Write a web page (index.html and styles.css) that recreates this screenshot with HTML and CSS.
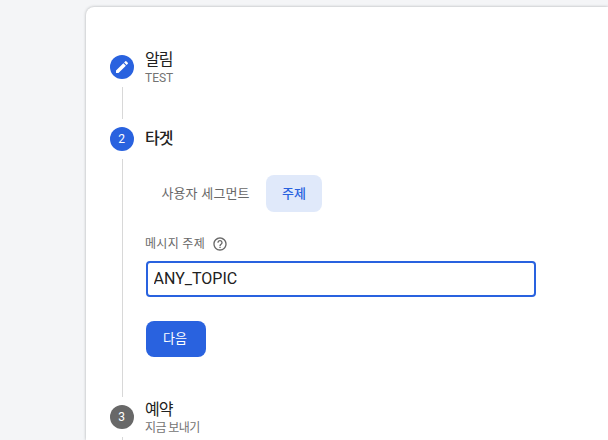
FILE: index.html
```html
<!DOCTYPE html>
<html lang="ko">
<head>
<meta charset="utf-8">
<title>알림</title>
<link rel="stylesheet" href="styles.css">
</head>
<body>
<main class="card">
  <section class="step step-done">
    <div class="rail">
      <span class="badge"><svg width="16" height="16" viewBox="0 0 24 24" fill="currentColor"><path d="M3 17.25V21h3.75L17.81 9.94l-3.75-3.75L3 17.25zM20.71 7.04a1 1 0 0 0 0-1.41l-2.34-2.34a1 1 0 0 0-1.41 0l-1.83 1.83 3.75 3.75 1.83-1.83z"/></svg></span>
      <span class="line"></span>
    </div>
    <div class="content">
      <h2 class="title">알림</h2>
      <p class="summary latin">TEST</p>
    </div>
  </section>
  <section class="step step-active">
    <div class="rail">
      <span class="badge">2</span>
      <span class="line"></span>
    </div>
    <div class="content">
      <h2 class="title">타겟</h2>
      <div class="tabs">
        <button class="tab">사용자 세그먼트</button>
        <button class="tab selected">주제</button>
      </div>
      <div class="label-row">
        <label class="label" for="topic">메시지 주제</label>
        <svg class="help" width="16" height="16" viewBox="0 0 24 24" fill="currentColor"><path d="M11 18h2v-2h-2v2zm1-16C6.48 2 2 6.48 2 12s4.480 10 10 10 10-4.480 10-10S17.520 2 12 2zm0 18c-4.410 0-8-3.590-8-8s3.590-8 8-8 8 3.590 8 8-3.590 8-8 8zm0-14c-2.210 0-4 1.790-4 4h2c0-1.100.9-2 2-2s2 .9 2 2c0 2-3 1.750-3 5h2c0-2.250 3-2.500 3-5 0-2.210-1.790-4-4-4z"/></svg>
      </div>
      <input class="field" id="topic" value="ANY_TOPIC">
      <button class="next">다음</button>
    </div>
  </section>
  <section class="step step-next">
    <div class="rail">
      <span class="badge muted">3</span>
      <span class="line"></span>
    </div>
    <div class="content">
      <h2 class="title">예약</h2>
      <p class="summary">지금 보내기</p>
    </div>
  </section>
</main>
</body>
</html>
```

FILE: styles.css
```css
* { box-sizing: border-box; }

body {
  margin: 0;
  height: 440px;
  overflow: hidden;
  padding: 7px 0 0 86px;
  background: #f4f5f7;
  color: #212121;
  font-family: Roboto, "Noto Sans CJK KR", sans-serif;
}

.card {
  height: 433px;
  padding: 41px 24px 0;
  background: #fff;
  border-radius: 8px 0 0 0;
  box-shadow: 0 0 3px rgba(60, 64, 67, .4);
}

.step {
  display: grid;
  grid-template-columns: 24px 1fr;
  column-gap: 12px;
}
.step-done { height: 72px; }
.step-active { height: 278px; }
.step-next { height: 42px; }

.rail {
  display: flex;
  flex-direction: column;
  align-items: center;
  gap: 8px;
  height: 100%;
  padding-top: 7px;
}
.badge {
  display: flex;
  flex: none;
  align-items: center;
  justify-content: center;
  width: 24px;
  height: 24px;
  border-radius: 50%;
  background: #2962df;
  color: #fff;
  font-size: 12px;
}
.badge:not(:has(svg)) { padding-right: 1px; }
.badge svg { margin-right: 1px; }
.muted { background: #686868; }
.line {
  flex: 1;
  width: 1px;
  margin: 0 0 1px 1px;
  background: #d8d8d8;
}
.step-next .line { margin-bottom: 0; }

.title {
  margin: 0 0 0 -1px;
  padding-top: 1px;
  font-size: 16px;
  font-weight: 400;
  line-height: 22px;
  letter-spacing: -1px;
}
.summary {
  margin: -1px 0 0 -1px;
  color: #737373;
  font-size: 12px;
  line-height: 16px;
  letter-spacing: -.6px;
}
.latin { letter-spacing: 0; }

.step-active .title { padding-top: 8px; font-weight: 500; }

.tabs { display: flex; margin-top: 25px; }
.tab {
  height: 37px;
  padding: 0 16px 2px 15px;
  border: 0;
  border-radius: 8px;
  background: none;
  color: #686868;
  font: 400 13px "Noto Sans CJK KR", sans-serif;
  letter-spacing: .1px;
}
.tab:first-child { width: 120px; white-space: nowrap; }
.selected {
  width: 56px;
  padding-right: 15px;
  background: #e0e9fa;
  color: #2962df;
  font-weight: 500;
}

.label-row {
  display: flex;
  align-items: center;
  gap: 7px;
  height: 20px;
  margin-top: 22px;
  color: #686868;
  font-size: 12px;
}
.label { margin-left: -1px; padding-bottom: 3px; letter-spacing: .3px; }

.field {
  display: block;
  width: 390px;
  height: 36px;
  margin-top: 7px;
  padding: 0 6px 2px 5.5px;
  border: 2px solid #2962df;
  border-radius: 4px;
  outline: 0;
  color: #212121;
  font: 16px Roboto, sans-serif;
}

.next {
  width: 60px;
  height: 36px;
  margin-top: 24px;
  padding: 0 2px 3px 0;
  border: 0;
  border-radius: 8px;
  background: #2962df;
  color: #fff;
  font: 400 13px "Noto Sans CJK KR", sans-serif;
}
```
